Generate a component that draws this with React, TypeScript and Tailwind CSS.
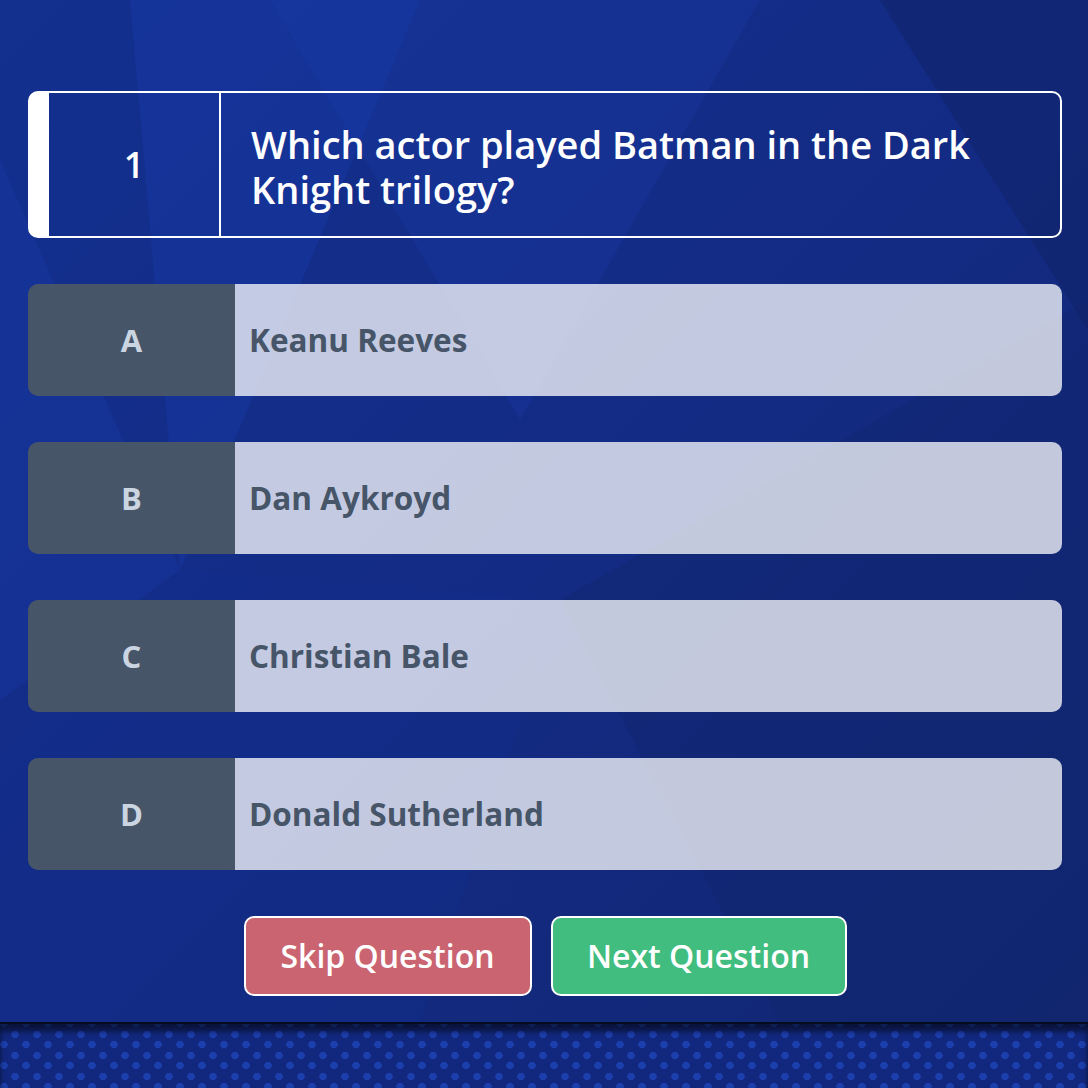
import { FC } from "react";

const answers = [
  { letter: "A", text: "Keanu Reeves" },
  { letter: "B", text: "Dan Aykroyd" },
  { letter: "C", text: "Christian Bale" },
  { letter: "D", text: "Donald Sutherland" },
];

const font = { fontFamily: '"Open Sans", "Noto Sans", sans-serif' };

const Backdrop: FC = () => (
  <svg
    className="absolute inset-0 w-full h-full"
    viewBox="0 0 1088 1088"
    preserveAspectRatio="none"
  >
    <defs>
      <linearGradient id="base" x1="0" y1="0" x2="1" y2="1">
        <stop offset="0" stopColor="#13308f" />
        <stop offset="0.5" stopColor="#132b84" />
        <stop offset="1" stopColor="#112670" />
      </linearGradient>
    </defs>
    <rect width="1088" height="1088" fill="url(#base)" />
    <polygon points="130,0 420,0 180,570" fill="#1b3db0" opacity="0.35" />
    <polygon points="270,0 760,0 520,420" fill="#1a3aa8" opacity="0.3" />
    <polygon points="0,160 180,570 0,700" fill="#1a3cb0" opacity="0.3" />
    <polygon points="880,0 1088,0 1088,330" fill="#0f2266" opacity="0.5" />
    <polygon points="560,600 1088,300 1088,1022 780,1022" fill="#10246a" opacity="0.35" />
    <polygon points="180,570 560,600 420,1022 0,1022 0,760" fill="#12308e" opacity="0.3" />
  </svg>
);

export default function App() {
  return (
    <div
      className="relative h-[1088px] overflow-hidden bg-[#132a80] text-white"
      style={font}
    >
      <Backdrop />

      <main className="relative h-[1022px] pl-[28px] pr-[26px] pt-[91px] flex flex-col gap-[46px]">
        <div className="flex h-[147px] rounded-[10px] border-2 border-l-[21px] border-white">
          <div className="w-[172px] shrink-0 border-r-2 border-white flex items-center justify-center text-[36px] font-semibold">
            1
          </div>
          <div className="flex-1 flex items-center pl-[30px] pr-6 pt-1 text-[38px] font-semibold leading-[45px]">
            Which actor played Batman in the Dark Knight trilogy?
          </div>
        </div>

        {answers.map((a) => (
          <div
            key={a.letter}
            className="flex h-[112px] rounded-[10px] overflow-hidden"
          >
            <div className="w-[207px] shrink-0 bg-[#475569] flex items-center justify-center text-[31px] font-bold text-[#cbd5e1]">
              {a.letter}
            </div>
            <div className="flex-1 bg-white/75 flex items-center pl-[14px] text-[31.5px] font-bold text-[#475569]">
              {a.text}
            </div>
          </div>
        ))}

        <div className="flex justify-center gap-[19px]">
          <button className="w-[288px] h-[80px] rounded-[10px] border-2 border-white bg-[#ca6471] text-[32px] font-semibold text-white">
            Skip Question
          </button>
          <button className="w-[296px] h-[80px] rounded-[10px] border-2 border-white bg-[#41bd7f] text-[32px] font-semibold text-white">
            Next Question
          </button>
        </div>
      </main>

      <footer className="relative h-[66px] border-t-2 border-[#050a1e] bg-[#12287e]">
        <div className="absolute inset-0 bg-[radial-gradient(circle,#1c3fae_3.5px,transparent_4px)] bg-[length:22px_21px] bg-[position:4px_0px]" />
        <div className="absolute inset-0 bg-[radial-gradient(circle,#1c3fae_3.5px,transparent_4px)] bg-[length:22px_21px] bg-[position:15px_10px]" />
        <div className="absolute inset-0 shadow-[inset_0_7px_6px_rgba(0,0,0,0.55)]" />
      </footer>
    </div>
  );
}
